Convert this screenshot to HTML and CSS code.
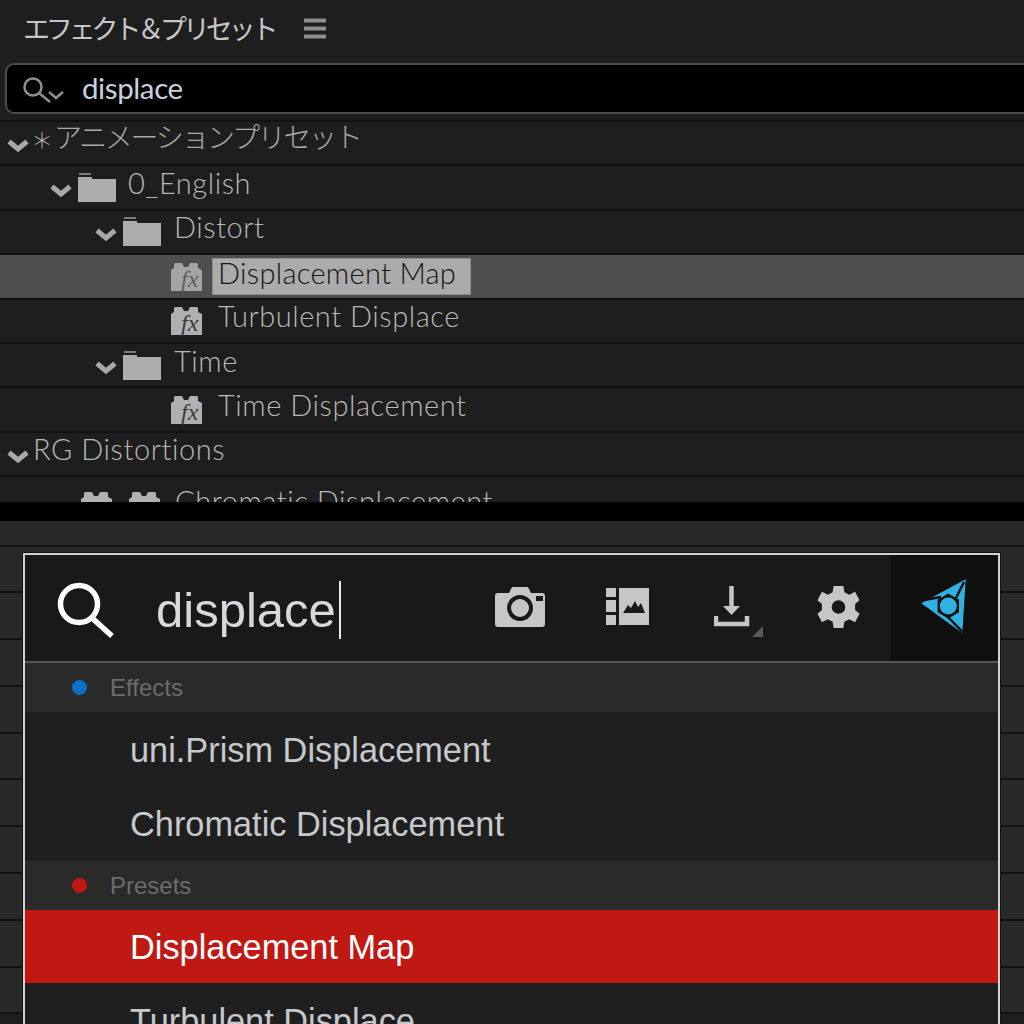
FILE: index.html
```html
<!DOCTYPE html>
<html lang="ja">
<head>
<meta charset="utf-8">
<title>エフェクト&amp;プリセット</title>
<link rel="stylesheet" href="styles.css">
</head>
<body>
<svg class="defs" width="0" height="0" aria-hidden="true">
  <defs>
    <path id="chev" d="M2 3.5 L11 11 L20 3.5" fill="none" stroke="#a8a8a8" stroke-width="5"/>
    <g id="folder">
      <rect x="1" y="0" width="12" height="2" fill="#7d7d7d"/>
      <path d="M0 4 H14 V6 H38 V29 H0 Z" fill="#adadad"/>
    </g>
    <path id="block" d="M1 30V9L4 7V3L5 2H12L14 6H18L20 2H27L28 3V7L32 9V30Z"/>
    <g id="fx">
      <use href="#block" fill="#b0b0b0"/>
      <text x="11" y="26" class="fx-text">fx</text>
    </g>
    <g id="fx-light">
      <use href="#block" fill="#a4a4a4"/>
      <text x="11" y="26" class="fx-text fx-soft">fx</text>
    </g>
  </defs>
</svg>

<div class="stage">
  <section class="ae-panel">
    <header class="ae-head">
      <h1 class="ae-title">エフェクト＆プリセット</h1>
      <svg class="menu-icon" width="22" height="21" viewBox="0 0 22 21"><path d="M0 2.5H22M0 10.500H22M0 18.500H22" stroke="#8e8e8e" stroke-width="4"/></svg>
    </header>
    <div class="ae-search">
      <svg class="ae-search-icon" width="42" height="28" viewBox="0 0 42 28" fill="none" stroke="#8f8f8f"><circle cx="10" cy="10" r="8.500" stroke-width="2.500"/><path d="M16 16L27 25" stroke-width="2.500"/><path d="M26 15L33 21L40 15" stroke-width="2.500"/></svg>
      <span class="ae-query">displace</span>
    </div>
    <div class="tree">
      <div class="row d0"><svg class="chev" width="22" height="14"><use href="#chev"/></svg><span class="label jp"><span class="star">＊</span>アニメーションプリセット</span></div>
      <div class="row d1"><svg class="chev" width="22" height="14"><use href="#chev"/></svg><svg class="folder" width="38" height="29"><use href="#folder"/></svg><span class="label">0_English</span></div>
      <div class="row d2"><svg class="chev" width="22" height="14"><use href="#chev"/></svg><svg class="folder" width="38" height="29"><use href="#folder"/></svg><span class="label">Distort</span></div>
      <div class="row d3 selected"><svg class="fx" width="33" height="31"><use href="#fx-light"/></svg><span class="label leaf">Displacement Map</span></div>
      <div class="row d3"><svg class="fx" width="33" height="31"><use href="#fx"/></svg><span class="label leaf">Turbulent Displace</span></div>
      <div class="row d2"><svg class="chev" width="22" height="14"><use href="#chev"/></svg><svg class="folder" width="38" height="29"><use href="#folder"/></svg><span class="label">Time</span></div>
      <div class="row d3"><svg class="fx" width="33" height="31"><use href="#fx"/></svg><span class="label leaf">Time Displacement</span></div>
      <div class="row d0"><svg class="chev" width="22" height="14"><use href="#chev"/></svg><span class="label">RG Distortions</span></div>
      <div class="row d4">
        <svg class="pack" width="33" height="31" viewBox="0 0 33 31"><use href="#block" fill="#b0b0b0"/><path d="M5 15H14V19H9V23H14M19 15H27V19H22V23H28" fill="none" stroke="#333" stroke-width="2"/></svg>
        <svg class="pack" width="33" height="31" viewBox="0 0 33 31"><use href="#block" fill="#b0b0b0"/><path d="M9 17H22M19 22H29" fill="none" stroke="#333" stroke-width="3"/></svg>
        <span class="label pack-label">Chromatic Displacement</span>
      </div>
    </div>
  </section>

  <div class="divider"></div>

  <section class="host">
    <div class="host-row short"></div>
    <div class="host-row"></div><div class="host-row"></div><div class="host-row"></div>
    <div class="host-row"></div><div class="host-row"></div><div class="host-row"></div>
    <div class="host-row"></div><div class="host-row"></div><div class="host-row"></div>
    <div class="host-row"></div>

    <div class="palette">
      <div class="pal-head">
        <svg class="pal-search" width="60" height="58" viewBox="0 0 60 58" fill="none" stroke="#fff"><circle cx="22" cy="22" r="18.500" stroke-width="5.500"/><path d="M35 36L55 54" stroke-width="5.500"/></svg>
        <div class="pal-input">displace<span class="caret"></span></div>
        <div class="tools">
          <div class="tool">
            <svg width="50" height="40" viewBox="0 0 50 40"><path fill="#c6c6c6" fill-rule="evenodd" d="M3 6H14L17 0H33L36 6H47Q50 6 50 9V37Q50 40 47 40H3Q0 40 0 37V9Q0 6 3 6ZM25 8A13 13 0 1 0 25 34A13 13 0 1 0 25 8ZM25 12A9 9 0 1 1 25 30A9 9 0 1 1 25 12ZM41 9V14H48V9Z"/><circle cx="25" cy="21" r="7.500" fill="#c6c6c6"/></svg>
          </div>
          <div class="tool tool-img">
            <svg width="43" height="37" viewBox="0 0 43 37"><path fill="#c6c6c6" fill-rule="evenodd" d="M0 0H10V9H0ZM0 12H10V24H0ZM0 27H10V37H0ZM13 0H43V37H13ZM17 25H39L35 15L32 19L29 13L25 20L22 17Z"/></svg>
          </div>
          <div class="tool tool-dl">
            <svg width="36" height="41" viewBox="0 0 36 41" fill="none" stroke="#c6c6c6"><path d="M17.500 0V26" stroke-width="4.500"/><path d="M9 20H26L17.500 29Z" fill="#c6c6c6" stroke="none"/><path d="M2 30V38H33V30" stroke-width="4.500"/></svg>
            <svg class="corner" width="11" height="11" viewBox="0 0 11 11"><path d="M0 11L11 0V11Z" fill="#5a5a5a"/></svg>
          </div>
          <div class="tool">
            <svg width="43" height="44" viewBox="-22 -22 44 44"><path fill="#c6c6c6" fill-rule="evenodd" d="M-5 -21.500H5L6 -15L11 -12.500L17 -15.500L21.500 -7L17 -3V3L21.500 7L17 15.500L11 12.500L6 15L5 21.500H-5L-6 15L-11 12.500L-17 15.500L-21.500 7L-17 3V-3L-21.500 -7L-17 -15.500L-11 -12.500L-6 -15ZM0 -7A7 7 0 1 0 0 7A7 7 0 1 0 0 -7Z"/></svg>
          </div>
          <div class="tool tool-logo">
            <svg width="48" height="56" viewBox="0 0 48 56"><path fill="#2fb2e2" d="M45.700 1.300L1.300 25.300L42.300 55Z"/><path d="M4 22L21 19M44 4L36 20M42.300 53.700L24 35" fill="none" stroke="#0f0f0f" stroke-width="2.500"/><path d="M28.300 15.500L39 21.750V34.250L28.300 40.500L17.600 34.250V21.750Z" fill="#0f0f0f"/><circle cx="28.300" cy="28" r="8.500" fill="#2fb2e2"/></svg>
          </div>
        </div>
      </div>
      <div class="group"><i class="dot blue"></i>Effects</div>
      <div class="item">uni.Prism Displacement</div>
      <div class="item">Chromatic Displacement</div>
      <div class="group"><i class="dot red"></i>Presets</div>
      <div class="item active">Displacement Map</div>
      <div class="item">Turbulent Displace</div>
    </div>
  </section>
</div>
</body>
</html>
```

FILE: styles.css
```css
* { box-sizing: border-box; }
html, body { margin: 0; padding: 0; background: #1e1e1e; }
.defs { position: absolute; }
.stage { width: 1024px; height: 1024px; overflow: hidden; display: flex; flex-direction: column; }

.ae-panel { background: #1e1e1e; flex: none; }
.ae-head { height: 63px; display: flex; align-items: center; padding: 0 0 7px 23px; }
.ae-title { margin: 0; font: 400 27px "Noto Sans CJK JP", sans-serif; letter-spacing: -4.150px; color: #c6c6c6; width: 281px; white-space: nowrap; line-height: 30px; }
.menu-icon { flex: none; }

.ae-search { height: 51px; margin: 0 -20px 7px 5px; background: #000; border: 2px solid #4b4b4b; border-radius: 9px; display: flex; align-items: center; padding: 0 0 2px 16px; }
.ae-search-icon { flex: none; margin-right: 17px; margin-top: 6px; }
.ae-query { font: 400 29.500px Lato, sans-serif; color: #c9d2dc; letter-spacing: -0.4px; }

.tree { height: 382px; overflow: hidden; border-top: 2px solid #101010; margin-top: -1px; }
.row { height: 44.400px; border-bottom: 2px solid #101010; display: flex; align-items: center; background: #1e1e1e; }
.d0 { padding-left: 7px; }
.d1 { padding-left: 50px; }
.d2 { padding-left: 95px; }
.d3 { padding-left: 170px; }
.d4 { padding-left: 80px; }
.chev { flex: none; margin-top: 4px; }
.folder { flex: none; margin-left: 6px; }
.label { font: 300 29px Lato, "Noto Sans CJK JP", sans-serif; color: #b8b8b8; letter-spacing: 0.55px; margin-left: 12px; padding-bottom: 9px; white-space: nowrap; line-height: 34px; }
.d0 .label { margin-left: 4px; }
.d2 .label { margin-left: 13px; }
.jp { font-size: 28px; letter-spacing: -2.300px; color: #a8a8a8; }
.star { font-size: 22px; letter-spacing: 0; margin-right: 1px; margin-left: -2px; }
.leaf { margin-left: 9px; padding: 0 14px 0 6px; height: 37px; line-height: 27px; }
.selected { background: #4e4e4e; }
.selected .leaf { background: #ababab; color: #141414; border: 1px solid #8e8e8e; padding-left: 5px; letter-spacing: 0.3px; }
.fx { flex: none; }
.fx-text { font: italic 400 24px "Liberation Serif", serif; fill: #3a3a3a; }
.fx-soft { fill: #5e5e5e; }
.pack { flex: none; margin-right: 15px; margin-top: 14px; }
.pack-label { margin-left: -1px; padding-bottom: 0; margin-top: 5px; }

.divider { height: 19px; background: #000; flex: none; }

.host { position: relative; flex: 1; min-height: 0; }
.host-row { height: 46.800px; background: #282828; border-bottom: 2px solid #121212; }
.host-row.short { height: 25.500px; }

.palette { position: absolute; left: 23px; top: 32px; width: 977px; height: 520px; border: 2px solid #d2d2d2; border-bottom: 0; box-shadow: 0 0 0 1px #121212; background: #1f1f1f; font-family: "Liberation Sans", Arial, sans-serif; overflow: hidden; }
.pal-head { height: 108px; background: #191919; border-bottom: 2px solid #565656; display: flex; align-items: center; }
.pal-search { flex: none; margin-left: 32px; margin-top: 6px; }
.pal-input { flex: none; margin-left: 39px; font-size: 49px; color: #d6dadd; display: flex; align-items: center; height: 58px; margin-top: 4px; width: 311px; }
.caret { width: 2px; height: 58px; background: #e8e8e8; margin-left: 3px; }
.tools { display: grid; grid-template-columns: 106px 106px 106px 106px 108px; height: 100%; margin-left: auto; }
.tool { position: relative; display: flex; align-items: center; justify-content: center; padding-bottom: 3px; }
.tool-img { padding-left: 2px; }
.tool-logo { background: #0f0f0f; padding: 0 2px 5px 0; }
.corner { position: absolute; left: 73px; top: 71px; }

.group { height: 49px; background: #2a2a2a; display: flex; align-items: center; font-size: 24px; color: #6c6c6c; padding-left: 47px; }
.dot { width: 15px; height: 15px; border-radius: 50%; margin-right: 23px; flex: none; }
.blue { background: #0a70c4; }
.red { background: #bf1713; }
.item { height: 74.500px; display: flex; align-items: center; padding: 2px 0 0 105px; font-size: 34.350px; color: #c6c9cb; background: #1f1f1f; }
.item.active { height: 73px; background: #c01813; color: #fff; }
```
